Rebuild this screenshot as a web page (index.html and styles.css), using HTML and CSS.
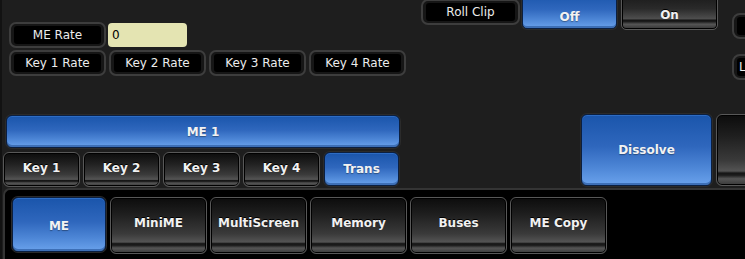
FILE: index.html
```html
<!DOCTYPE html>
<html lang="en">
<head>
  <meta charset="UTF-8">
  <title>ME Panel</title>
  <link rel="stylesheet" href="styles.css">
</head>
<body>
  <div class="screen">

    <!-- Rates + clip controls -->
    <div class="top">
      <div class="rates">
        <div class="rate-row">
          <div class="label"><span>ME Rate</span></div>
          <input class="rate-input" type="text" value="0">
        </div>
        <div class="rate-row">
          <div class="label"><span>Key 1 Rate</span></div>
          <div class="label"><span>Key 2 Rate</span></div>
          <div class="label"><span>Key 3 Rate</span></div>
          <div class="label"><span>Key 4 Rate</span></div>
        </div>
      </div>

      <div class="roll">
        <div class="label roll-label"><span>Roll Clip</span></div>
        <div class="btn blue off">Off</div>
        <div class="btn dark on">On</div>
      </div>

      <div class="edge">
        <div class="label edge-label"><span></span></div>
        <div class="label edge-label"><span>L</span></div>
      </div>
    </div>

    <!-- ME keys and transition -->
    <div class="mid">
      <div class="me-block">
        <div class="btn blue me-bar">ME 1</div>
        <div class="keys">
          <div class="btn dark key">Key 1</div>
          <div class="btn dark key">Key 2</div>
          <div class="btn dark key">Key 3</div>
          <div class="btn dark key">Key 4</div>
          <div class="btn blue trans">Trans</div>
        </div>
      </div>
      <div class="transition">
        <div class="btn blue dissolve">Dissolve</div>
        <div class="btn dark dissolve-next"></div>
      </div>
    </div>

    <!-- Page tabs -->
    <div class="tabs">
      <div class="btn blue tab tab-active">ME</div>
      <div class="btn dark tab">MiniME</div>
      <div class="btn dark tab">MultiScreen</div>
      <div class="btn dark tab">Memory</div>
      <div class="btn dark tab">Buses</div>
      <div class="btn dark tab">ME Copy</div>
    </div>

  </div>
</body>
</html>
```

FILE: styles.css
```css
body {
  margin: 0;
  background: #1e1e1e;
  font-family: "DejaVu Sans", Verdana, sans-serif;
  overflow: hidden;
}

.screen {
  width: 745px;
  height: 259px;
  border-left: 2px solid #121212;
  box-sizing: border-box;
  display: flex;
  flex-direction: column;
  overflow: hidden;
}

/* ---------- top ---------- */

.top {
  display: flex;
  height: 114px;
}

.rates {
  margin-left: 7px;
  padding-top: 22px;
  width: 397px;
  display: flex;
  flex-direction: column;
  gap: 2px;
}

.rate-row {
  display: flex;
  gap: 3px;
}

.label {
  width: 97px;
  height: 26px;
  box-sizing: border-box;
  border: 2px solid #3d3d3d;
  border-radius: 7px;
  background: #161616;
  padding: 2px 3px;
  flex-shrink: 0;
}

.label span {
  display: block;
  height: 100%;
  background: #000;
  border-radius: 3px;
  color: #ececec;
  font-size: 12px;
  line-height: 18px;
  text-align: center;
}

.rate-input {
  width: 79px;
  height: 24px;
  margin: 1px 0 0 -1px;
  box-sizing: border-box;
  border: none;
  border-radius: 4px;
  background: #e4e4b2;
  font-family: "DejaVu Sans", Verdana, sans-serif;
  font-size: 12px;
  color: #000;
  padding: 0 4px;
}

.roll {
  margin-left: 15px;
  height: 30px;
  display: flex;
  align-items: flex-end;
}

.roll-label {
  width: 99px;
  margin-bottom: 5px;
}

.btn {
  box-sizing: border-box;
  border-radius: 5px;
  color: #f2f2f2;
  font-size: 12px;
  font-weight: bold;
  display: flex;
  align-items: center;
  justify-content: center;
  flex-shrink: 0;
}

.blue {
  border: 1px solid #0b1f40;
  box-shadow: 0 0 0 1px #2b2b2b, inset 0 -2px 0 #3d6fb6, inset 0 1px 0 #2d6cc4;
  background: linear-gradient(#1a55ab 0%, #2f67bd 45%, #4d86d6 75%, #6aa2ec 100%);
  text-shadow: 0 1px 1px rgba(0, 0, 0, 0.35);
}

.dark {
  border: 1px solid #585858;
  box-shadow: inset 0 0 0 1px #000;
  background: linear-gradient(#0c0c0c 0%, #1f1f1f 30%, #3a3a3a 65%, #545454 80%, #161616 83%, #1c1c1c 86%, #555 91%, #3a3a3a 100%);
  text-shadow: 0 -1px 0 #000;
}

.off {
  width: 95px;
  height: 36px;
  margin-left: 2px;
  margin-bottom: 1px;
  padding-top: 11px;
}

.on {
  width: 97px;
  height: 36px;
  margin-left: 4px;
  padding-top: 5px;
  background: linear-gradient(#1a1a1a 0%, #2a2a2a 40%, #4e4e4e 70%, #141414 74%, #1c1c1c 78%, #555 86%, #333 100%);
}

.edge {
  margin-left: 14px;
  padding-top: 13px;
  display: flex;
  flex-direction: column;
  gap: 15px;
}

.edge-label {
  width: 40px;
  border-radius: 8px;
  height: 26px;
}

.edge-label span {
  text-align: left;
  padding-left: 2px;
}

/* ---------- middle ---------- */

.mid {
  display: flex;
  height: 74px;
}

.me-block {
  margin-left: 1px;
  width: 397px;
  display: flex;
  flex-direction: column;
}

.me-bar {
  margin-left: 3px;
  margin-top: 1px;
  width: 394px;
  height: 33px;
  border-radius: 6px;
}

.keys {
  margin-top: 4px;
  display: flex;
  gap: 3px;
}

.key {
  width: 77px;
  height: 35px;
  padding-bottom: 4px;
  border-radius: 6px;
}

.trans {
  width: 75px;
  height: 34px;
  margin-left: 1px;
  border-radius: 6px;
}

.transition {
  margin-left: 181px;
  display: flex;
  gap: 4px;
}

.dissolve {
  width: 131px;
  height: 72px;
  border-radius: 6px;
}

.dissolve-next {
  width: 60px;
  height: 72px;
  border-radius: 6px;
}

/* ---------- bottom tabs ---------- */

.tabs {
  flex: 1;
  margin-left: 1px;
  border: 2px solid #343434;
  border-right: none;
  border-bottom: none;
  border-radius: 7px 0 0 0;
  background: #000;
  display: flex;
  gap: 3px;
  padding: 7px 0 0 7px;
}

.tab {
  width: 97px;
  height: 57px;
  border-radius: 6px;
  padding-bottom: 5px;
}

.tab-active {
  width: 94px;
  height: 55px;
  margin-right: 1px;
  padding-bottom: 0;
  padding-top: 3px;
}
```
